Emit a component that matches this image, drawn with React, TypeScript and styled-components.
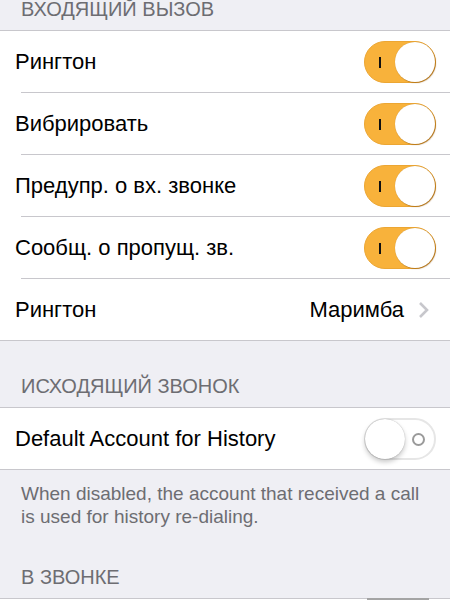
import React from "react";
import styled, { createGlobalStyle } from "styled-components";

const Global = createGlobalStyle`
  html, body { margin: 0; padding: 0; background: #efeff4; }
  body { font-family: "Liberation Sans", Arial, sans-serif; width: 450px; height: 600px; overflow: hidden; }
`;

const Page = styled.div`
  display: flex;
  flex-direction: column;
  background: #efeff4;
`;

const SectionHeader = styled.div<{ $h: number }>`
  height: ${(p) => p.$h}px;
  box-sizing: border-box;
  display: flex;
  align-items: flex-end;
  padding: 0 0 11px 21px;
  font-size: 20px;
  line-height: 20px;
  color: #6d6d72;
  text-transform: uppercase;
`;

const Group = styled.div`
  background: #fff;
  border-top: 1px solid #c8c7cc;
  border-bottom: 1px solid #c8c7cc;
`;

const Row = styled.div<{ $last?: boolean }>`
  height: 61px;
  display: flex;
  align-items: center;
  padding: 0 14px 0 15px;
  position: relative;
  &::after {
    content: "";
    display: ${(p) => (p.$last ? "none" : "block")};
    position: absolute;
    left: 21px;
    right: 0;
    bottom: -1px;
    height: 1px;
    background: #c8c7cc;
  }
  & + & { margin-top: 1px; }
`;

const Label = styled.div`
  flex: 1;
  font-size: 22px;
  color: #000;
  white-space: nowrap;
`;

const Value = styled.div`
  font-size: 22px;
  color: #000;
  margin-right: 14px;
`;

const Chevron = styled.svg`
  width: 11px;
  height: 18px;
  margin-right: 7px;
`;

const Track = styled.div<{ $on: boolean }>`
  width: 72px;
  height: 42px;
  box-sizing: border-box;
  border-radius: 21px;
  position: relative;
  background: ${(p) => (p.$on ? "#f8b23b" : "#fff")};
  border: ${(p) => (p.$on ? "1px solid #eca633" : "2px solid #e6e6e6")};
  flex-shrink: 0;
`;

const Knob = styled.div<{ $on: boolean }>`
  position: absolute;
  top: ${(p) => (p.$on ? 0 : -1)}px;
  ${(p) => (p.$on ? "right: 0;" : "left: -1px;")}
  width: 40px;
  height: 40px;
  border-radius: 50%;
  background: #fff;
  box-shadow: ${(p) =>
    p.$on
      ? "1px 1px 1px rgba(140, 80, 0, 0.55), 0 0 1px rgba(0,0,0,0.2)"
      : "0 3px 5px rgba(0,0,0,0.22), 0 0 1px rgba(0,0,0,0.35)"};
`;

const OnMark = styled.div`
  position: absolute;
  left: 14px;
  top: 15px;
  width: 2px;
  height: 11px;
  background: #111;
`;

const OffMark = styled.div`
  position: absolute;
  right: 9px;
  top: 13px;
  width: 9px;
  height: 9px;
  border-radius: 50%;
  border: 2px solid #9a9a9a;
`;

const Footer = styled.div`
  padding: 12px 24px 0 21px;
  font-size: 19px;
  line-height: 23px;
  color: #6d6d72;
`;

const PeekRow = styled.div`
  height: 4px;
  background: #fff;
  border-top: 1px solid #c8c7cc;
  display: flex;
  justify-content: flex-end;
  padding-right: 21px;
`;

const PeekBar = styled.div`
  width: 62px;
  height: 2px;
  margin-top: -1px;
  background: #a4a4a4;
`;

function Toggle({ on }: { on: boolean }) {
  return (
    <Track $on={on}>
      {on ? <OnMark /> : <OffMark />}
      <Knob $on={on} />
    </Track>
  );
}

export default function App() {
  const incoming = ["Рингтон", "Вибрировать", "Предупр. о вх. звонке", "Сообщ. о пропущ. зв."];
  return (
    <Page>
      <Global />
      <SectionHeader $h={30}>Входящий вызов</SectionHeader>
      <Group>
        {incoming.map((t) => (
          <Row key={t}>
            <Label>{t}</Label>
            <Toggle on />
          </Row>
        ))}
        <Row $last>
          <Label>Рингтон</Label>
          <Value>Маримба</Value>
          <Chevron viewBox="0 0 11 18">
            <path d="M2 2 L9 9 L2 16" fill="none" stroke="#c7c7cc" strokeWidth="2.6" />
          </Chevron>
        </Row>
      </Group>
      <SectionHeader $h={66}>Исходящий звонок</SectionHeader>
      <Group>
        <Row $last>
          <Label>Default Account for History</Label>
          <Toggle on={false} />
        </Row>
      </Group>
      <Footer>
        When disabled, the account that received a call is used for history re-dialing.
      </Footer>
      <SectionHeader $h={70}>В звонке</SectionHeader>
      <PeekRow>
        <PeekBar />
      </PeekRow>
    </Page>
  );
}
